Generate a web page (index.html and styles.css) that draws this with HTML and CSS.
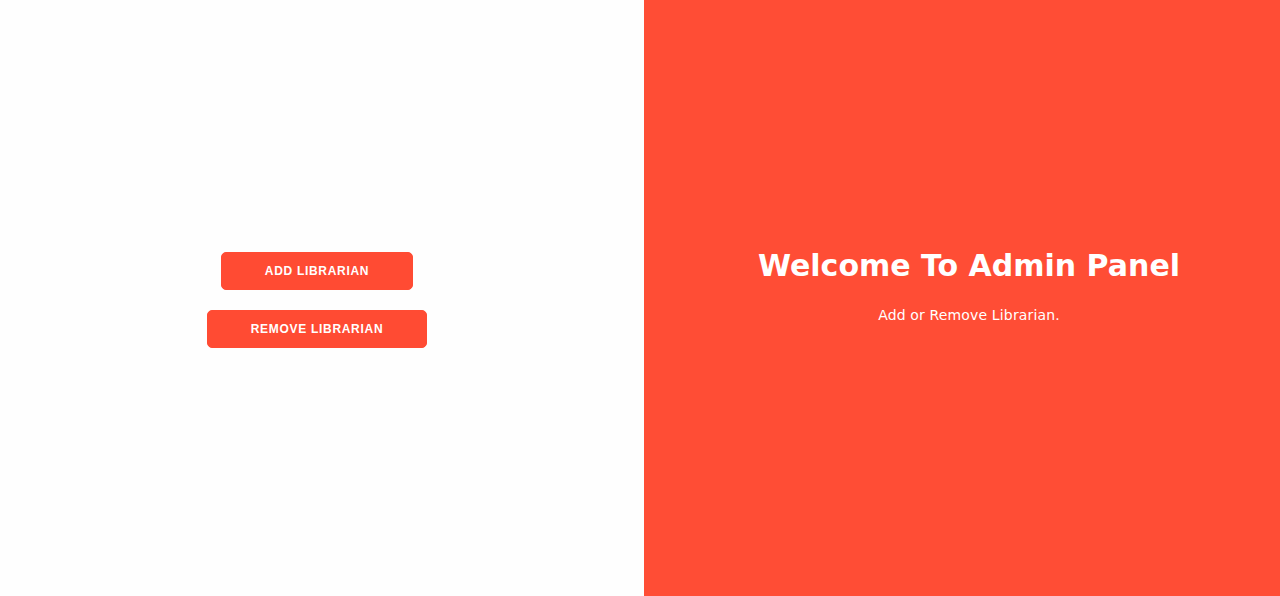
FILE: index.html
```html
<!DOCTYPE html>
<html>
<head>
<meta charset="utf-8">
<link rel="stylesheet" href="styles.css">
</head>
<body>
<div class="container">
  <div class="left">
    <div class="actions">
      <button class="btn">Add Librarian</button>
      <button class="btn">Remove Librarian</button>
    </div>
  </div>
  <div class="right">
    <h1 class="title">Welcome To Admin Panel</h1>
    <p class="sub">Add or Remove Librarian.</p>
  </div>
</div>
</body>
</html>
```
FILE: styles.css
```css
html, body {
  margin: 0;
  padding: 0;
  height: 100%;
}
body {
  font-family: "DejaVu Sans", sans-serif;
  background: #fefefe;
}
.container {
  display: flex;
  height: 596px;
  width: 1280px;
}
.left {
  width: 644px;
  padding-right: 10px;
  box-sizing: border-box;
  display: flex;
  align-items: center;
  justify-content: center;
  background: #fefefe;
}
.actions {
  display: flex;
  flex-direction: column;
  align-items: center;
  gap: 20px;
  margin-top: 4px;
}
.btn {
  font-family: "Liberation Sans", Arial, sans-serif;
  font-size: 12px;
  font-weight: bold;
  letter-spacing: 0.7px;
  text-transform: uppercase;
  color: #fff;
  background: #ff4b33;
  border: 1px solid #ff4b33;
  border-radius: 5px;
  padding: 11px 43px;
  line-height: 14px;
  cursor: pointer;
}
.right {
  flex: 1;
  background: #ff4d35;
  color: #fff;
  display: flex;
  flex-direction: column;
  align-items: center;
  justify-content: center;
  padding-left: 14px;
  padding-bottom: 24px;
}
.title {
  font-family: "DejaVu Sans", sans-serif;
  font-weight: bold;
  font-size: 30px;
  margin: 0;
  line-height: 36px;
}
.sub {
  font-family: "DejaVu Sans", sans-serif;
  font-size: 14px;
  letter-spacing: 0.15px;
  margin: 22px 0 0;
  line-height: 18px;
}
```
